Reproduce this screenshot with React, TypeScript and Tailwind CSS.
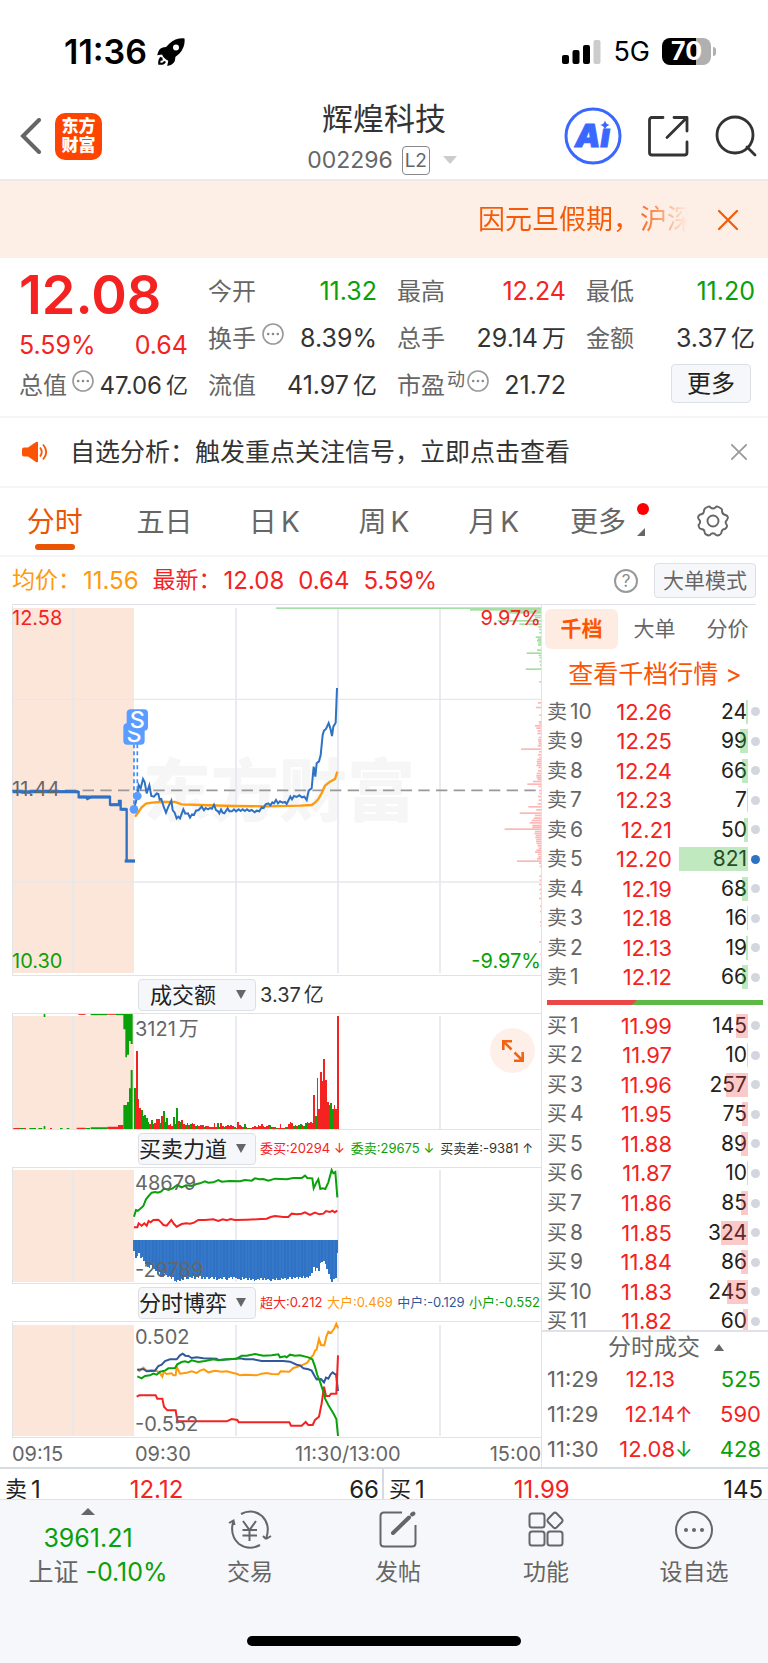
import type { ReactNode } from "react";

const RED = "#f52222";
const GREEN = "#0aa00a";
const BLUE = "#2f72c4";
const ORANGE = "#ff9a0c";

/* ---------- small parts ---------- */

function Dots({ className = "" }: { className?: string }) {
  return (
    <svg viewBox="0 0 22 22" className={`h-[22px] w-[22px] shrink-0 ${className}`} aria-hidden="true">
      <circle cx="11" cy="11" r="10" fill="none" stroke="#999" strokeWidth="1.6" />
      <circle cx="6.2" cy="11" r="1.3" fill="#888" />
      <circle cx="11" cy="11" r="1.3" fill="#888" />
      <circle cx="15.8" cy="11" r="1.3" fill="#888" />
    </svg>
  );
}

function Stat({ label, value, unit, tone = "text-[#333]", extra, small }: { label: string; value: string; unit?: string; tone?: string; extra?: ReactNode; small?: boolean }) {
  return (
    <div className="flex h-[47px] items-center justify-between whitespace-nowrap">
      <dt className="flex items-center text-2xl text-[#666]">
        {label}
        {extra}
      </dt>
      <dd className={`flex items-center ${small ? "text-[24px]" : "text-[25px]"} ${tone}`}>
        {value}
        {unit && <span className={`pl-1 ${small ? "text-[22px]" : "text-[24px]"}`}>{unit}</span>}
      </dd>
    </div>
  );
}

function Cross({ className, color, width }: { className: string; color: string; width: number }) {
  return (
    <svg viewBox="0 0 20 20" className={className} aria-hidden="true">
      <path d="M1 1 19 19M19 1 1 19" stroke={color} strokeWidth={width} fill="none" strokeLinecap="round" />
    </svg>
  );
}

function IndicatorSelect({ name }: { name: string }) {
  return (
    <label className="relative ml-[126px] block h-8 w-[118px] shrink-0">
      <select
        aria-label={name}
        className="h-8 w-full appearance-none rounded border border-[#dcdfe6] bg-[#f6f7fa] pr-[28px] text-center text-[22px] leading-7 text-[#222]"
      >
        <option>{name}</option>
      </select>
      <svg viewBox="0 0 10 9" className="pointer-events-none absolute top-[11px] right-[10px] h-[9px] w-[10px]" aria-hidden="true">
        <path d="M0 0H10L5 9Z" fill="#666" />
      </svg>
    </label>
  );
}

/* ---------- chart data ---------- */

const preOpen = "38,574 60,574 66,578 90,578 96,574 130,574 138,572 150,576 200,574 236,576 236,591 258,591 262,597 275,591 330,591 330,614 357,614 357,603 362,603 362,628 380,628 380,783 405,783";

const priceLine =
  "402,628 412,588 416,555 422,565 429,537 434,546 440,580 448,556 454,588 462,590 470,580 475,582 479,599 484,597 491,620 498,638 505,620 514,602 518,630 524,638 530,655 535,650 540,655 550,628 556,641 564,640 570,653 576,643 582,645 588,632 596,630 605,620 612,631 617,624 624,628 630,624 636,626 642,614 648,630 654,634 658,640 663,628 668,638 673,640 683,625 688,634 696,634 702,628 708,634 716,628 722,633 728,628 735,633 741,628 748,633 755,630 764,637 770,632 778,634 785,622 791,624 797,613 805,610 811,616 817,607 822,610 828,600 834,610 840,604 848,608 855,606 860,612 866,600 871,590 876,598 882,588 890,591 898,586 906,592 913,590 920,600 926,572 935,565 941,500 946,530 950,490 957,484 962,465 968,405 972,392 978,387 986,369 991,385 996,408 1000,380 1007,368 1011,264";

const averageLine =
  "405,650 415,637 425,622 438,611 455,608 480,606 525,606 545,613 600,615 700,618 800,619 900,617 935,615 945,608 955,597 965,580 975,557 990,545 1005,537 1012,515";

const profileRed: [number, number][] = [
  [308, 9], [322, 15], [345, 5], [365, 7], [371, 5], [377, 18], [384, 14], [392, 10], [400, 11], [412, 7], [419, 9], [425, 8], [431, 7], [437, 10], [447, 60],
  [455, 6], [464, 9], [472, 5], [478, 11], [484, 13], [490, 12], [496, 14], [502, 8], [512, 9], [520, 13], [527, 14], [533, 13], [538, 10], [544, 24], [552, 41],
  [559, 8], [571, 6], [580, 5], [589, 9], [600, 7], [611, 10], [620, 38], [629, 14], [639, 64], [646, 18], [654, 22], [661, 28], [668, 34], [676, 26], [681, 26],
  [687, 109], [694, 18], [700, 20], [706, 16], [712, 17], [718, 14], [724, 15], [730, 13], [737, 10], [744, 7], [750, 14], [756, 18], [763, 9], [770, 8],
  [776, 12], [783, 72], [789, 6], [799, 4], [828, 5], [840, 4], [853, 6], [868, 5], [880, 3], [895, 6], [918, 3], [934, 3], [966, 3], [976, 2], [1025, 6], [1062, 2],
];

const profileGreen: [number, number][] = [
  [24, 795], [29, 213], [34, 116], [38, 100], [46, 22], [52, 18], [62, 130], [72, 65], [80, 8], [88, 5], [98, 5], [111, 16], [117, 10], [122, 12], [128, 8],
  [134, 9], [150, 12], [159, 43], [166, 7], [173, 4], [184, 5], [195, 3], [207, 46], [245, 5],
];

const volume: [number, "r" | "g"][] = [
  [122, "g"], [234, "r"], [91, "r"], [64, "r"], [58, "g"], [38, "r"], [42, "g"], [32, "g"], [20, "g"], [15, "r"], [28, "g"], [16, "r"], [18, "r"], [31, "r"], [30, "r"],
  [17, "g"], [38, "r"], [53, "g"], [20, "r"], [34, "g"], [12, "r"], [16, "r"], [10, "r"], [35, "g"], [14, "r"], [63, "g"], [24, "r"], [22, "g"], [27, "r"], [16, "r"],
  [12, "g"], [18, "r"], [11, "r"], [14, "g"], [17, "r"], [14, "r"], [10, "g"], [12, "r"], [10, "r"], [11, "r"], [12, "r"], [6, "g"], [8, "r"], [8, "r"], [5, "g"],
  [6, "r"], [5, "r"], [19, "r"], [7, "r"], [18, "g"], [5, "r"], [17, "r"], [8, "r"], [6, "g"], [9, "r"], [11, "r"], [9, "r"], [11, "r"], [8, "r"], [5, "g"],
  [4, "r"], [21, "r"], [11, "r"], [10, "r"], [5, "r"], [14, "g"], [5, "r"], [3, "g"], [4, "r"], [4, "g"], [7, "r"], [9, "r"], [6, "r"], [12, "r"], [8, "r"],
  [14, "r"], [8, "r"], [6, "r"], [8, "r"], [11, "r"], [12, "g"], [6, "r"], [5, "r"], [6, "r"], [4, "g"], [3, "r"], [15, "r"], [4, "r"], [3, "r"], [5, "r"],
  [6, "g"], [14, "r"], [21, "r"], [18, "r"], [10, "g"], [12, "g"], [8, "r"], [12, "g"], [14, "g"], [13, "r"], [10, "g"], [18, "g"], [20, "g"], [19, "r"], [20, "r"],
  [18, "r"], [103, "r"], [40, "g"], [152, "r"], [60, "r"], [170, "r"], [145, "r"], [211, "r"], [148, "r"], [80, "r"], [72, "r"], [77, "g"], [61, "g"], [71, "r"], [60, "r"],
  [338, "r"],
];

const forceBottom = [
  843, 864, 858, 850, 864, 862, 874, 882, 890, 893, 884, 898, 896, 904, 912, 906, 918, 920, 910, 914, 922, 918, 926, 920, 932, 935, 930, 932, 926, 930, 922, 926, 928,
  920, 924, 918, 926, 922, 924, 919, 926, 922, 928, 920, 926, 923, 921, 928, 922, 930, 926, 924, 928, 922, 926, 929, 924, 922, 927, 921, 925, 928, 926, 930, 922, 928,
  925, 931, 924, 929, 926, 932, 930, 927, 931, 924, 929, 925, 931, 927, 929, 932, 926, 930, 924, 929, 931, 925, 928, 924, 930, 926, 922, 928, 920, 924, 921, 926, 922,
  925, 919, 923, 920, 925, 918, 908, 890, 904, 895, 902, 880, 876, 874, 882, 896, 912, 928, 936, 926, 924, 850,
];

const sellForce =
  "402,740 408,720 414,722 420,717 430,708 438,688 446,678 455,668 466,666 474,668 484,664 492,655 505,660 518,655 532,645 545,652 558,646 575,648 590,642 600,640 615,634 625,638 640,637 655,630 665,635 690,633 720,634 735,630 755,632 765,625 778,628 790,627 805,632 825,626 860,628 880,624 905,624 915,617 922,624 937,625 941,655 948,640 955,628 961,657 968,655 976,657 985,637 995,600 1000,610 1006,606 1012,682";
const buyForce =
  "402,772 412,772 416,760 425,767 433,760 440,767 446,753 452,757 460,750 475,749 484,758 490,765 500,767 508,757 514,750 522,762 530,770 545,762 558,760 570,761 582,758 595,750 615,750 640,748 655,753 668,748 680,751 692,747 705,750 740,749 770,748 800,746 812,741 825,738 850,741 865,741 875,731 890,733 905,731 915,727 930,735 945,728 958,733 970,731 978,723 990,726 997,722 1004,727 1012,722";

const largeHolder =
  "412,296 418,303 430,293 440,302 455,300 470,303 480,310 487,320 491,306 500,312 515,310 520,316 527,316 530,290 540,311 560,308 575,304 590,309 600,302 612,298 625,307 645,302 665,305 680,304 700,309 712,312 720,316 735,314 770,316 785,311 800,309 815,312 835,313 842,304 868,305 880,294 895,290 910,284 922,278 930,266 940,255 945,242 950,238 957,207 963,225 973,226 979,200 985,185 993,189 1003,175 1009,161 1014,175";
const midHolder =
  "412,300 430,297 440,304 465,302 475,288 485,284 495,273 510,268 530,268 540,256 548,251 556,257 565,258 575,264 590,262 610,265 650,266 655,270 690,268 720,265 735,268 760,268 785,273 850,273 870,275 890,284 900,286 910,295 925,298 935,302 945,320 950,328 963,327 972,337 978,323 985,326 992,313 998,307 1004,312 1008,313 1014,363";
const smallHolder =
  "412,319 425,325 435,318 450,316 460,311 470,314 480,305 495,302 505,295 525,294 532,283 545,276 555,274 565,277 575,271 595,276 615,273 640,268 655,271 680,268 710,266 725,257 740,257 765,252 790,257 815,256 835,253 840,262 855,259 860,262 870,254 885,257 900,256 925,262 937,268 945,290 952,315 960,335 970,365 975,385 985,405 1000,430 1009,447 1014,498";
const superHolder =
  "410,380 418,376 467,376 472,386 487,386 492,410 502,421 527,421 532,454 680,454 695,447 712,450 716,457 868,457 873,467 905,467 917,456 925,465 938,465 945,450 957,440 965,400 972,350 978,378 988,378 993,371 1009,371 1014,256";

/* Background shared by all panes: call-auction zone and time grid. */
function Grid({ top, bottom }: { top: number; bottom: number }) {
  return (
    <>
      <rect x="36" y={top} width="366" height={bottom - top} fill="#fce6da" />
      {[219, 708, 1014, 1320].map((x) => (
        <line key={x} x1={x} x2={x} y1={top} y2={bottom} stroke="#e4e7ed" strokeWidth="5" />
      ))}
      <line x1="37.5" x2="37.5" y1={top - 6} y2={bottom + 6} stroke="#dfe2e8" strokeWidth="3" />
    </>
  );
}

function Pane({ top, height, className, label, children }: { top: number; height: number; className: string; label: string; children: ReactNode }) {
  return (
    <svg role="img" aria-label={label} viewBox={`36 ${top} 1587 ${height}`} preserveAspectRatio="none" className={`relative block w-full ${className}`}>
      {children}
    </svg>
  );
}

function Line({ points, color, width = 6 }: { points: string; color: string; width?: number }) {
  return <polyline points={points} fill="none" stroke={color} strokeWidth={width} strokeLinejoin="miter" />;
}

function ChartColumn() {
  return (
    <section className="min-w-0 flex-1 border-r border-[#dfe2e8] pl-3">
      <div className="relative border-b border-[#dfe2e8]">
        <span aria-hidden="true" className="absolute top-[138px] left-[131px] text-[68px] leading-[96px] font-black whitespace-nowrap text-[#f6f6f6]">
          东方财富
        </span>
        <Pane top={15} height={1110} className="h-[370px]" label="分时走势">
          <Grid top={24} bottom={1119} />
          <line x1="36" x2="1623" y1="298" y2="298" stroke="#e4e7ed" strokeWidth="4" />
          <line x1="36" x2="1623" y1="846" y2="846" stroke="#e4e7ed" strokeWidth="5" />
          <line x1="36" x2="1623" y1="571" y2="571" stroke="#999" strokeWidth="5" strokeDasharray="34 19" />
          {profileGreen.map(([y, w]) => (
            <rect key={y} x={1623 - w} y={y - 2} width={w} height="5" fill="#a6dfa6" />
          ))}
          {profileRed.map(([y, w]) => (
            <rect key={y} x={1623 - w} y={y - 2} width={w} height="5" fill="#fcb6b6" />
          ))}
          <Line points={averageLine} color={ORANGE} width={7} />
          <Line points={preOpen} color={BLUE} width={7} />
          <path d="M38 575H236M236 591H330M330 614H360M362 628H380M374 783H405" stroke={BLUE} strokeWidth="9" />
          <Line points={priceLine} color={BLUE} width={6} />
          <path d="M402 433V628M412 391V588" stroke="#3c8bff" strokeWidth="5" strokeDasharray="12 9" />
          <circle cx="402" cy="628" r="13" fill="#5a9cff" />
          <circle cx="412" cy="588" r="13" fill="#5a9cff" />
          <g fontFamily="Inter, sans-serif" fontSize="70" fontWeight="500" fill="#fff" textAnchor="middle">
            <rect x="370" y="370" width="64" height="64" rx="12" fill="#5a9cff" />
            <text x="402" y="427">S</text>
            <rect x="380" y="328" width="64" height="64" rx="12" fill="#5a9cff" />
            <text x="412" y="385">S</text>
          </g>
        </Pane>
        <span className="absolute top-0 left-0 text-[20px] leading-[26px] text-[#f52222]">12.58</span>
        <span className="absolute top-0 right-0 text-[20px] leading-[26px] text-[#f52222]">9.97%</span>
        <span className="absolute top-[171px] left-0 text-[20px] leading-[26px] text-[#666]">11.44</span>
        <span className="absolute bottom-0 left-0 text-[20px] leading-7 text-[#0aa00a]">10.30</span>
        <span className="absolute right-0 bottom-0 text-[20px] leading-7 text-[#0aa00a]">-9.97%</span>
      </div>

      <div className="flex h-[37px] items-center">
        <IndicatorSelect name="成交额" />
        <span className="pl-1 text-[20px] text-[#333]">
          3.37<span className="pl-[3px]">亿</span>
        </span>
      </div>
      <div className="relative border-y border-[#dfe2e8]">
        <Pane top={132} height={345} className="h-[115px]" label="成交额">
          <Grid top={138} bottom={477} />
          <path d="M131 132h5v9h-5zM272 132h50v4h-50zM347 132h23v4h-23zM370 132h28v90h-6v-9h-5v41h-6v8h-5v-84h-6z" fill={GREEN} />
          <path d="M370 477v-72h11v-9h6v-41h5v-55h6v177zM131 468h5v9h-5zM272 472h50v5h-50z" fill={GREEN} />
          <path d="M235 133h22M322 133h25" stroke={RED} strokeWidth="3" />
          <path d="M322 477v-7h32v-5h16v12z" fill={RED} />
          <path d="M40 476h20M72 476h6M150 476h6M230 475h26" stroke={RED} strokeWidth="4" />
          <path d="M60 476h12M88 476h20M115 476h12M180 476h8M200 476h8M256 476h14" stroke={GREEN} strokeWidth="4" />
          {volume.map(([h, c], i) => (
            <rect key={i} x={402.5 + i * 5.07} y={477 - h} width="5.2" height={h} fill={c === "r" ? RED : GREEN} shapeRendering="crispEdges" />
          ))}
        </Pane>
        <span className="absolute top-px left-[123px] text-[20px] leading-7 text-[#666]">
          3121<span className="pl-[3px]">万</span>
        </span>
        <button type="button" aria-label="全屏" className="absolute top-[14px] right-[6px] flex h-[45px] w-[45px] items-center justify-center rounded-full bg-[#fef0e9]">
          <svg viewBox="0 0 24 24" className="h-6 w-6" fill="none" stroke="#f26414" strokeWidth="2.6" aria-hidden="true">
            <path d="M2.3 11V2.3H11M2.3 2.3 10.5 10.5M21.7 13V21.7H13M21.7 21.7 13.5 13.5" />
          </svg>
        </button>
      </div>

      <div className="flex h-[37px] items-center">
        <IndicatorSelect name="买卖力道" />
        <p className="flex flex-1 justify-between pr-2 pl-1 text-[13px] whitespace-nowrap">
          <span className="text-[#f52222]">委买:20294 ↓</span>
          <span className="text-[#0aa00a]">委卖:29675 ↓</span>
          <span className="text-[#333]">买卖差:-9381 ↑</span>
        </p>
      </div>
      <div className="relative border-y border-[#dfe2e8]">
        <Pane top={594} height={345} className="h-[115px]" label="买卖力道">
          <Grid top={600} bottom={936} />
          {forceBottom.map((b, i) => (
            <rect key={i} x={400 + i * 5.08} y="810" width="5.2" height={b - 810} fill={i % 2 ? "#2f72c4" : "#3577c8"} shapeRendering="crispEdges" />
          ))}
          <Line points={sellForce} color={GREEN} />
          <Line points={buyForce} color={RED} />
        </Pane>
        <span className="absolute top-px left-[123px] text-[20px] leading-7 text-[#666]">48679</span>
        <span className="absolute bottom-0 left-[123px] text-[20px] leading-[26px] text-[#666]">-29789</span>
      </div>

      <div className="flex h-[37px] items-center">
        <IndicatorSelect name="分时博弈" />
        <p className="flex flex-1 justify-between pr-px pl-1 text-[13px] whitespace-nowrap">
          <span className="text-[#f52222]">超大:0.212</span>
          <span className="text-[#ff9a0c]">大户:0.469</span>
          <span className="text-[#31589c]">中户:-0.129</span>
          <span className="text-[#0aa00a]">小户:-0.552</span>
        </p>
      </div>
      <div className="relative border-y border-[#dfe2e8]">
        <Pane top={156} height={345} className="h-[115px]" label="分时博弈">
          <Grid top={165} bottom={498} />
          <Line points={largeHolder} color={ORANGE} />
          <Line points={midHolder} color="#31589c" />
          <Line points={superHolder} color={RED} />
          <Line points={smallHolder} color={GREEN} />
        </Pane>
        <span className="absolute top-px left-[123px] text-[20px] leading-7 text-[#666]">0.502</span>
        <span className="absolute bottom-0 left-[123px] text-[20px] leading-[26px] text-[#666]">-0.552</span>
      </div>
      <div className="flex h-7 items-center pt-[3px] text-[20px] text-[#666]">
        <span className="w-[123px]">09:15</span>
        <span className="w-[160px]">09:30</span>
        <span className="flex-1">11:30/13:00</span>
        <span>15:00</span>
      </div>
    </section>
  );
}

/* ---------- order book ---------- */

type Quote = [string, string, number];

const asks: Quote[] = [
  ["10", "12.26", 24], ["9", "12.25", 99], ["8", "12.24", 66], ["7", "12.23", 7], ["6", "12.21", 50],
  ["5", "12.20", 821], ["4", "12.19", 68], ["3", "12.18", 16], ["2", "12.13", 19], ["1", "12.12", 66],
];
const bids: Quote[] = [
  ["1", "11.99", 145], ["2", "11.97", 10], ["3", "11.96", 257], ["4", "11.95", 75], ["5", "11.88", 89], ["6", "11.87", 10],
  ["7", "11.86", 85], ["8", "11.85", 324], ["9", "11.84", 86], ["10", "11.83", 245], ["11", "11.82", 60],
];

function QuoteRow({ side, quote }: { side: "卖" | "买"; quote: Quote }) {
  const [level, price, amount] = quote;
  return (
    <li className="flex items-center pr-2 pl-[5px] leading-6">
      <span className="flex w-[56px] items-center text-[20px] text-[#666]">
        {side}
        <span className="pl-[3px] text-[21px]">{level}</span>
      </span>
      <span className="w-[69px] text-right text-[22px] text-[#f52222]">{price}</span>
      <span className="relative flex-1 text-right text-[21px] text-[#222]">
        <span className="pr-px">{amount}</span>
        <span
          className={`absolute top-0 right-0 h-full ${side === "卖" ? "bg-[#2fb52f]/30" : "bg-[#f53c3c]/28"}`}
          style={{ width: `${Math.max(1, (amount / 821) * 69)}px` }}
        />
      </span>
      <span className={`ml-[3px] h-[9px] w-[9px] rounded-full ${amount === 821 ? "bg-[#2f72c4]" : "bg-[#d3d6de]"}`} />
    </li>
  );
}

function OrderBook() {
  const trades = [
    { time: "11:29", price: "12.13", arrow: "", arrowTone: "", amount: "525", tone: "text-[#0aa00a]" },
    { time: "11:29", price: "12.14", arrow: "↑", arrowTone: "text-[#f52222]", amount: "590", tone: "text-[#f52222]" },
    { time: "11:30", price: "12.08", arrow: "↓", arrowTone: "text-[#0aa00a]", amount: "428", tone: "text-[#0aa00a]" },
  ];
  return (
    <section className="flex w-[226px] shrink-0 flex-col">
      <div className="flex pt-1 pl-[3px] text-[21px] text-[#666]">
        <button type="button" className="h-10 w-[73px] rounded-md bg-[#feece3] font-bold text-[#fb5404]">千档</button>
        <button type="button" className="h-10 w-[73px]">大单</button>
        <button type="button" className="h-10 w-[73px]">分价</button>
      </div>
      <a href="#depth" className="pt-1 pb-[2px] text-center text-[25px] leading-[42px] whitespace-nowrap text-[#fb5404]">查看千档行情 &gt;</a>
      <ul className="grid h-[295px] auto-rows-fr">
        {asks.map((q) => (
          <QuoteRow key={q[0]} side="卖" quote={q} />
        ))}
      </ul>
      <svg viewBox="0 0 216 5" preserveAspectRatio="none" className="mt-2 mr-[5px] mb-[6px] ml-[5px] h-[5px]" aria-hidden="true">
        <rect width="216" height="5" fill="#5cb946" />
        <path d="M0 0H90L85 5H0Z" fill="#e84848" />
      </svg>
      <div className="h-[319px] overflow-hidden">
        <ul className="grid h-[325px] auto-rows-fr">
          {bids.map((q) => (
            <QuoteRow key={q[0]} side="买" quote={q} />
          ))}
        </ul>
      </div>
      <button type="button" className="flex h-8 items-center justify-center gap-[14px] border-t-2 border-[#dfe2e8] pl-[22px] text-[23px] text-[#666]">
        分时成交
        <svg viewBox="0 0 10 7" className="h-[7px] w-[10px]" aria-hidden="true">
          <path d="M0 7H10L5 0Z" fill="#666" />
        </svg>
      </button>
      <ul className="text-[22px]">
        {trades.map((t) => (
          <li key={t.price} className="flex h-[35px] items-center pr-[7px] pl-[5px]">
            <span className="w-[64px] text-[#666]">{t.time}</span>
            <span className="w-[64px] text-right text-[#f52222]">{t.price}</span>
            <span className={`text-[21px] ${t.arrowTone}`}>{t.arrow}</span>
            <span className={`flex-1 text-right ${t.tone}`}>{t.amount}</span>
          </li>
        ))}
      </ul>
    </section>
  );
}

/* ---------- page ---------- */

function BestQuote({ side, price, amount, className }: { side: string; price: string; amount: string; className: string }) {
  return (
    <div className={`grid grid-cols-3 pl-[5px] ${className}`}>
      <span className="flex text-[22px]">
        {side}
        <span className="pl-1 text-[24px]">1</span>
      </span>
      <span className="text-[#f52222]">{price}</span>
      <span className="text-right">{amount}</span>
    </div>
  );
}

function KTab({ unit }: { unit: string }) {
  return (
    <button type="button" className="pt-px">
      {unit}
      <span className="pl-1">K</span>
    </button>
  );
}

function NavItem({ label, children }: { label: string; children: ReactNode }) {
  return (
    <button type="button" className="flex flex-1 flex-col items-center pt-2 text-[23px] text-[#666]">
      <svg viewBox="0 0 44 44" className="h-11 w-11" fill="none" stroke="#666" strokeWidth="2" aria-hidden="true">
        {children}
      </svg>
      <span className="mt-[2px] leading-9">{label}</span>
    </button>
  );
}

export default function App() {
  return (
    <main className="min-h-screen w-full overflow-x-hidden bg-white font-['Inter','Noto_Sans_CJK_SC',sans-serif] text-[#333]">
      {/* status bar */}
      <div className="flex h-[95px] items-center justify-between pt-2 pr-[52px] pl-16 text-black">
        <div className="flex items-center gap-[10px]">
          <span className="text-[34px] font-semibold">11:36</span>
          <svg viewBox="0 0 28 28" className="h-7 w-7" aria-hidden="true">
            <path
              fillRule="evenodd"
              d="M27.500.4Q18 0 12.500 5.500L9 9Q4.500 9 2.500 11.500Q.8 14 .2 17.300L5 16.500Q6.500 20 8.500 21Q10 22 11.300 22.800L10.200 28Q14.500 27.500 16.500 25Q18.500 22.500 18.300 19L22.500 15.500Q28.500 9 27.500.4ZM19 6.600A3 3 0 1 1 19 12.600 3 3 0 0 1 19 6.600Z"
            />
            <path d="M4.300 19.500Q1.800 21.500 2.200 25.800Q6.800 26.300 8 23.300M4.300 19.500L4.800 22.500" fill="none" stroke="#000" strokeWidth="2" />
          </svg>
        </div>
        <div className="flex items-center">
          <svg viewBox="0 0 39 24" className="h-6 w-[39px]" aria-hidden="true">
            <rect x="0" y="15" width="7" height="9" rx="2" />
            <rect x="10.5" y="10" width="7" height="14" rx="2" />
            <rect x="21" y="5" width="7" height="19" rx="2" />
            <rect x="31.500" y="0" width="7" height="24" rx="2" fill="#ccc" />
          </svg>
          <span className="pt-[2px] pl-3 text-[27px]">5G</span>
          <span className="ml-3 flex h-[27px] w-[49px] items-center justify-center rounded-lg bg-[linear-gradient(to_right,#000_70%,#b0b0b0_70%)] text-[25px] leading-[27px] font-bold text-white">
            70
          </span>
          <span className="ml-[2px] h-[9px] w-[3px] rounded-r-full bg-[#b0b0b0]" />
        </div>
      </div>

      {/* title bar */}
      <header className="grid h-[86px] grid-cols-3 items-center border-b-2 border-[#ebebeb] px-[11px] pb-[2px]">
        <div className="flex items-center gap-[14px] pl-[9px]">
          <button type="button" aria-label="返回">
            <svg viewBox="0 0 21 36" className="h-9 w-[21px]" fill="none" stroke="#666" strokeWidth="4" aria-hidden="true">
              <path d="M19 2 3 18 19 34" strokeLinecap="round" />
            </svg>
          </button>
          <a href="#home" className="flex h-[47px] w-[47px] flex-col items-center justify-center rounded-[10px] bg-[#ff4400] text-[17px] leading-[19px] font-black text-white">
            <span>东方</span>
            <span>财富</span>
          </a>
        </div>
        <div className="text-center">
          <h1 className="text-[31px] leading-[44px] text-[#333]">辉煌科技</h1>
          <button type="button" className="mt-1 inline-flex items-center pr-1 whitespace-nowrap text-[23px] leading-[30px] text-[#666]">
            002296
            <span className="ml-[9px] h-[29px] w-7 rounded border border-[#888] text-[19px] leading-7">L2</span>
            <svg viewBox="0 0 14 8" className="ml-[13px] h-2 w-[14px]" aria-hidden="true">
              <path d="M0 0H14L7 8Z" fill="#ccc" />
            </svg>
          </button>
        </div>
        <div className="flex items-center justify-end">
          <button type="button" aria-label="Ai">
            <svg viewBox="0 0 58 58" className="h-[58px] w-[58px]">
              <circle cx="29" cy="29" r="27" fill="none" stroke="#3a68ff" strokeWidth="3" />
              <text x="11" y="40" fontFamily="Inter, sans-serif" fontWeight="900" fontStyle="italic" fontSize="32" fill="#3a68ff" stroke="#3a68ff">Aı</text>
              <path d="M41 13.500q1 4 5 4.500q-4 .5-5 5q-1-4.500-5-5q4-.5 5-4.500z" fill="#3a68ff" />
            </svg>
          </button>
          <button type="button" aria-label="分享" className="ml-[25px]">
            <svg viewBox="0 0 42 42" className="h-[42px] w-[42px]" fill="none" stroke="#333" strokeWidth="2.8" strokeLinecap="round" strokeLinejoin="round" aria-hidden="true">
              <path d="M16 2.500H5Q2.500 2.500 2.500 5V37.500Q2.500 40 5 40H37.500Q40 40 40 37.500V27M27 2.500H40V16M39 3.500 20 22.500" />
            </svg>
          </button>
          <button type="button" aria-label="搜索" className="ml-[26px]">
            <svg viewBox="0 0 42 42" className="h-[42px] w-[42px]" fill="none" stroke="#333" strokeWidth="2.800" strokeLinecap="round" aria-hidden="true">
              <circle cx="20" cy="20" r="18" />
              <path d="M32 32 40 40" />
            </svg>
          </button>
        </div>
      </header>

      {/* marquee */}
      <div className="flex h-[77px] items-center justify-end bg-[#fdeee6] pr-[30px] text-[#f45a07]">
        <p className="w-[210px] overflow-hidden bg-[linear-gradient(to_right,#f45a07_75%,#fdeee6_100%)] bg-clip-text pt-[2px] text-[27px] whitespace-nowrap text-transparent">
          因元旦假期，沪深
        </p>
        <button type="button" aria-label="关闭公告" className="ml-[30px]">
          <Cross className="h-5 w-5" color="#f45a07" width={2.2} />
        </button>
      </div>

      {/* quote summary */}
      <section className="grid h-40 grid-cols-4 gap-x-5 border-b-2 border-[#f5f5f5] pt-[10px] pr-[13px] pl-[19px]">
        <div>
          <p className="text-[54px] leading-[54px] font-semibold text-[#f52222]">12.08</p>
          <p className="flex h-10 items-center justify-between pt-2 text-[25px] text-[#f52222]">
            <span>5.59%</span>
            <span>0.64</span>
          </p>
          <dl>
            <Stat label="总值" value="47.06" unit="亿" small extra={<Dots className="mb-[10px] ml-[5px]" />} />
          </dl>
        </div>
        <dl>
          <Stat label="今开" value="11.32" tone="text-[#0aa00a]" />
          <Stat label="换手" value="8.39%" extra={<Dots className="mb-[10px] ml-[6px]" />} />
          <Stat label="流值" value="41.97" unit="亿" />
        </dl>
        <dl>
          <Stat label="最高" value="12.24" tone="text-[#f52222]" />
          <Stat label="总手" value="29.14" unit="万" />
          <Stat
            label="市盈"
            value="21.72"
            extra={
              <>
                <span className="mb-3 pl-[2px] text-[18px]">动</span>
                <Dots className="mb-[10px] ml-[2px]" />
              </>
            }
          />
        </dl>
        <div>
          <dl>
            <Stat label="最低" value="11.20" tone="text-[#0aa00a]" />
            <Stat label="金额" value="3.37" unit="亿" />
          </dl>
          <div className="flex justify-end pt-[2px] pr-1">
            <button type="button" className="h-[39px] w-20 rounded border border-[#dcdfe6] bg-[#f6f7fa] text-2xl leading-8 text-[#222]">更多</button>
          </div>
        </div>
      </section>

      {/* signal notice */}
      <section className="flex h-[70px] items-center border-b-2 border-[#f5f5f5] pr-[21px] pl-[22px]">
        <svg viewBox="0 0 26 22" className="h-[22px] w-[26px]" aria-hidden="true">
          <path d="M2 6.500H6L14 1Q16 0 16 2V20Q16 22 14 21L6 15.500H2Q0 15.500 0 13.500V8.500Q0 6.500 2 6.500Z" fill="#fb5404" />
          <path d="M18 6.500Q21.500 11 18 15.500M21 3.500Q27.500 11 21 18.500" fill="none" stroke="#fb5404" strokeWidth="1.8" />
        </svg>
        <p className="flex-1 pt-[2px] pl-[22px] text-[25px] whitespace-nowrap text-[#333]">自选分析：触发重点关注信号，立即点击查看</p>
        <button type="button" aria-label="关闭">
          <Cross className="h-4 w-4" color="#999" width={2.2} />
        </button>
      </section>

      {/* period tabs */}
      <nav className="grid h-[69px] grid-cols-7 border-b-2 border-[#f5f5f5] text-[28px] text-[#666]">
        <button type="button" className="relative pt-px text-[#ea5504]">
          分时
          <span className="absolute bottom-[5px] left-1/2 h-[6px] w-10 -translate-x-1/2 rounded-full bg-[#ea5504]" />
        </button>
        <button type="button" className="pt-px">五日</button>
        <KTab unit="日" />
        <KTab unit="周" />
        <KTab unit="月" />
        <button type="button" className="relative pt-px pr-[11px]">
          更多
          <span className="absolute top-[15px] right-[9px] h-3 w-3 rounded-full bg-[#f00]" />
          <svg viewBox="0 0 8 8" className="absolute right-[13px] bottom-[19px] h-2 w-2" aria-hidden="true">
            <path d="M8 0V8H0Z" fill="#666" />
          </svg>
        </button>
        <button type="button" aria-label="设置" className="flex items-center justify-center pb-px">
          <svg viewBox="0 0 34 34" className="h-[34px] w-[34px]" fill="none" stroke="#666" strokeWidth="1.900" strokeLinejoin="round" aria-hidden="true">
            <path d="M11.500 3Q13.500 2 14.500 3.500Q17 5.500 19.500 3.500Q20.500 2 22.500 3L25 4.500Q26.500 5.500 26 7.500Q26.500 10.500 29.500 11Q31.500 11.500 32 13.500L31 16Q28.500 18 30.500 20.500Q31.500 22 30.500 23.500L29 25Q26 25 25.500 28Q25.500 30 23.500 31L21.500 31.500Q20 31.500 19 30Q17 28.500 15 30Q14 31.500 12.500 31.500L10 30.500Q8.500 29.500 8.500 27.500Q8 25 5 25Q3.500 25 3 23L2.500 21Q5.500 18 3 15.500Q1.500 14 2.500 12L4 10.500Q7.500 10.500 8 7Q8 5 9.500 4Z" />
            <circle cx="17" cy="17" r="5.500" />
          </svg>
        </button>
      </nav>

      {/* price line */}
      <div className="mx-3 flex h-12 items-center border-b border-[#dfe2e8] text-[24px] whitespace-nowrap text-[#f52222]">
        <span className="flex items-center text-[#ff9a0c]">
          <span className="pr-[2px] text-[23px]">均价：</span>11.56
        </span>
        <span className="flex items-center pl-[14px]">
          <span className="pr-[2px] text-[23px]">最新：</span>12.08
        </span>
        <span className="pl-[14px]">0.64</span>
        <span className="pl-[14px]">5.59%</span>
        <button type="button" aria-label="说明" className="ml-auto flex h-6 w-6 items-center justify-center rounded-full border-2 border-[#999] text-[17px] leading-5 text-[#888]">
          ?
        </button>
        <button type="button" className="ml-4 h-[35px] w-[102px] rounded border border-[#dcdfe6] bg-[#f6f7fa] text-[21px] leading-8 text-[#666]">大单模式</button>
      </div>

      <div className="flex border-b-2 border-[#d6dae1]">
        <ChartColumn />
        <OrderBook />
      </div>

      {/* best ask and bid */}
      <div className="grid h-[31px] grid-cols-2 overflow-hidden border-b border-[#dfe2e8] text-[24px] leading-[41px] text-[#222]">
        <BestQuote side="卖" price="12.12" amount="66" className="border-r-2 border-[#d6dae1] pr-[3px]" />
        <BestQuote side="买" price="11.99" amount="145" className="pr-[5px]" />
      </div>

      <footer className="bg-[#f6f7fa]">
        <nav className="flex h-[136px]">
          <a href="#index" className="flex w-[176px] flex-col items-center pt-2 text-[25px] text-[#0aa00a]">
            <svg viewBox="0 0 14 7" className="h-[7px] w-[14px]" aria-hidden="true">
              <path d="M0 7H14L7 0Z" fill="#666" />
            </svg>
            <span className="pt-[6px] leading-[34px]">3961.21</span>
            <span className="pl-5 leading-[34px] whitespace-nowrap">
              <span className="text-[#666]">上证</span> -0.10%
            </span>
          </a>
          <NavItem label="交易">
            <path d="M13 6Q24 0 34 8Q43 17 38 31M38 31 35 28M38 31 43 28M32 37Q21 43 11 36Q1 27 5.500 12.500M1 15 5.500 12.500 6.500 17" />
            <path d="M15 13 21.500 22 28 13M14.500 22H29M14.500 27.500H29M21.500 22V33" />
          </NavItem>
          <NavItem label="发帖">
            <path d="M26 4.500H8Q4.500 4.500 4.500 8V35Q4.500 38.500 8 38.500H36Q39.500 38.500 39.500 35V17" />
            <path d="M17 25 33 9.500" strokeWidth="4" strokeLinecap="round" />
            <path d="M36 6.500 37.500 5.500" strokeWidth="4" strokeLinecap="round" />
          </NavItem>
          <NavItem label="功能">
            <rect x="5.500" y="5.500" width="15" height="14" rx="2.500" />
            <rect x="5.500" y="23.500" width="15" height="14" rx="2.500" />
            <rect x="23.500" y="23.500" width="15" height="14" rx="2.500" />
            <path d="M29.500 5.300Q31 4 32.500 5.300L38 11Q39.200 12.500 38 14L32.500 19.500Q31 20.800 29.500 19.500L24 14Q22.800 12.500 24 11Z" />
          </NavItem>
          <NavItem label="设自选">
            <circle cx="22" cy="22" r="18" />
            <circle cx="14" cy="22" r="2" fill="#666" stroke="none" />
            <circle cx="22" cy="22" r="2" fill="#666" stroke="none" />
            <circle cx="30" cy="22" r="2" fill="#666" stroke="none" />
          </NavItem>
        </nav>
        <div className="pb-[17px]">
          <div className="mx-auto h-[10px] w-[274px] rounded-full bg-black" />
        </div>
      </footer>
    </main>
  );
}
